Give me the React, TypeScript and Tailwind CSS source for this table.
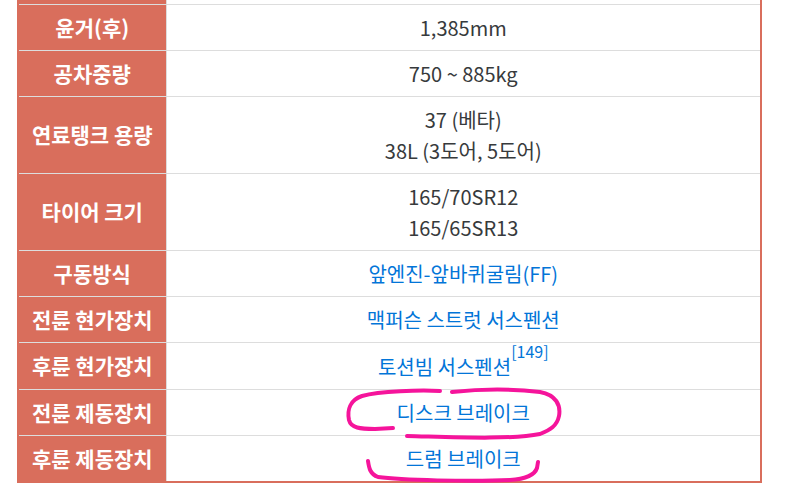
import React from "react";

type Row = {
  label: string;
  values: React.ReactNode[];
  link?: boolean;
  tall?: boolean;
};

const rows: Row[] = [
  { label: "", values: [""] },
  { label: "윤거(후)", values: ["1,385mm"] },
  { label: "공차중량", values: ["750 ~ 885kg"] },
  { label: "연료탱크 용량", values: ["37 (베타)", "38L (3도어, 5도어)"] },
  { label: "타이어 크기", values: ["165/70SR12", "165/65SR13"] },
  { label: "구동방식", values: ["앞엔진-앞바퀴굴림(FF)"], link: true },
  { label: "전륜 현가장치", values: ["맥퍼슨 스트럿 서스펜션"], link: true },
  {
    label: "후륜 현가장치",
    values: [
      <>
        토션빔 서스펜션
        <sup className="text-[16px] align-[9px]">[149]</sup>
      </>,
    ],
    link: true,
    tall: true,
  },
  { label: "전륜 제동장치", values: ["디스크 브레이크"], link: true },
  { label: "후륜 제동장치", values: ["드럼 브레이크"], link: true },
];

const Marker = () => (
  <svg
    className="absolute left-0 top-0 pointer-events-none"
    width={785}
    height={495}
    viewBox="0 0 785 495"
    fill="none"
    stroke="#f5149b"
    strokeWidth={4}
    strokeLinecap="round"
    strokeLinejoin="round"
  >
    <path d="M440 391 C420 390 380 391 362 396 C350 400 347 410 349 420 C351 428 360 429 375 429 L393 428" />
    <path d="M452 392 C480 389 515 389 540 392 C556 395 561 405 559 416 C557 426 550 430 540 434 C510 440 450 437 407 436" />
    <path d="M368 461 C369 468 370 474 378 477 C400 480 470 482 510 480 C527 479 535 474 537 468 L538 462" />
  </svg>
);

export default function App() {
  return (
    <div className="relative h-[495px] w-[785px] overflow-hidden bg-white font-['Noto_Sans_CJK_KR','Noto_Sans',sans-serif]">
      <div className="-mt-[43px] pl-[17px] w-[762px]">
        <table className="w-full border-collapse border-2 border-[#d96e5c] text-[20px] leading-[31px]">
          <tbody>
            {rows.map((r, idx) => (
              <tr key={idx} className={idx === 0 ? "h-[46px]" : ""}>
                <td className="w-[148px] border border-[#dddddd] bg-[#d96e5c] px-2 py-[7px] text-center align-middle text-[21px] font-bold text-white">
                  {r.label}
                </td>
                <td
                  className={
                    "border border-[#dddddd] px-2 text-center align-middle " +
                    (r.tall ? "pt-[8px] pb-[7px] " : "py-[7px] ") +
                    (r.link ? "text-[#0275d8]" : "text-[#373a3c]")
                  }
                >
                  {r.values.map((v, i) => (
                    <div key={i}>{v}</div>
                  ))}
                </td>
              </tr>
            ))}
          </tbody>
        </table>
      </div>
      <Marker />
    </div>
  );
}
